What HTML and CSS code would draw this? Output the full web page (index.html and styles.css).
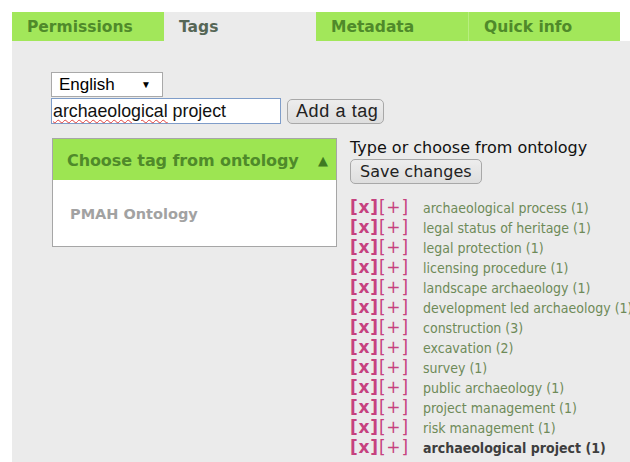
FILE: index.html
```html
<!DOCTYPE html>
<html lang="en">
<head>
<meta charset="utf-8">
<title>Tags</title>
<link rel="stylesheet" href="styles.css">
</head>
<body>
<div class="page">
  <nav class="tabs">
    <a class="tab">Permissions</a>
    <a class="tab active">Tags</a>
    <a class="tab">Metadata</a>
    <a class="tab">Quick info</a>
  </nav>
  <section class="panel">
    <div class="select"><span>English</span><span class="caret">&#9660;</span></div>
    <div class="add-row">
      <div class="input"><span class="misspelt">archaeological</span> project</div>
      <button class="btn">Add a tag</button>
    </div>
    <div class="columns">
      <div class="ontology">
        <div class="ontology-head"><span>Choose tag from ontology</span><span class="up">&#9650;</span></div>
        <div class="ontology-body">PMAH Ontology</div>
      </div>
      <div class="taglist">
        <p class="hint">Type or choose from ontology</p>
        <button class="btn save">Save changes</button>
        <ul class="tags">
          <li><span class="ops"><b>[x]</b>[+]</span><span class="name">archaeological process (1)</span></li>
          <li><span class="ops"><b>[x]</b>[+]</span><span class="name">legal status of heritage (1)</span></li>
          <li><span class="ops"><b>[x]</b>[+]</span><span class="name">legal protection (1)</span></li>
          <li><span class="ops"><b>[x]</b>[+]</span><span class="name">licensing procedure (1)</span></li>
          <li><span class="ops"><b>[x]</b>[+]</span><span class="name">landscape archaeology (1)</span></li>
          <li><span class="ops"><b>[x]</b>[+]</span><span class="name">development led archaeology (1)</span></li>
          <li><span class="ops"><b>[x]</b>[+]</span><span class="name">construction (3)</span></li>
          <li><span class="ops"><b>[x]</b>[+]</span><span class="name">excavation (2)</span></li>
          <li><span class="ops"><b>[x]</b>[+]</span><span class="name">survey (1)</span></li>
          <li><span class="ops"><b>[x]</b>[+]</span><span class="name">public archaeology (1)</span></li>
          <li><span class="ops"><b>[x]</b>[+]</span><span class="name">project management (1)</span></li>
          <li><span class="ops"><b>[x]</b>[+]</span><span class="name">risk management (1)</span></li>
          <li class="current"><span class="ops"><b>[x]</b>[+]</span><span class="name">archaeological project (1)</span></li>
        </ul>
      </div>
    </div>
  </section>
</div>
</body>
</html>
```
FILE: styles.css
```css
html, body {
  margin: 0;
  padding: 0;
  background: #ffffff;
  overflow: hidden;
}

.page {
  padding: 12px 0 0 12px;
  width: 618px;
  height: 450px;
}

/* tab strip */
.tabs {
  display: flex;
  height: 29px;
}

.tab {
  width: 152px;
  box-sizing: border-box;
  padding: 2px 0 0 15px;
  background: #a2e75a;
  color: #4f8a2a;
  font: bold 15.5px/27px "DejaVu Sans", sans-serif;
}

.tab + .tab {
  border-left: 1px solid #b8ee80;
}

.tab.active {
  width: 152px;
  background: #ebebeb;
  color: #566656;
  border-left: none;
}

.tab.active + .tab {
  border-left: none;
}

/* content panel */
.panel {
  background: #ebebeb;
  height: 421px;
  box-sizing: border-box;
  padding: 31px 0 0 39px;
  font-family: "Liberation Sans", Arial, sans-serif;
  color: #000;
}

.select {
  width: 112px;
  height: 25px;
  box-sizing: border-box;
  border: 1px solid #a9a9a9;
  background: #fff;
  display: flex;
  justify-content: space-between;
  align-items: center;
  padding: 0 11px 0 7px;
  font-size: 17px;
}

.caret {
  font-size: 10px;
}

.add-row {
  display: flex;
  align-items: center;
  margin-top: 1px;
}

.input {
  width: 230px;
  height: 26px;
  box-sizing: border-box;
  border: 1px solid #7f9dc9;
  background: #fff;
  padding: 0 0 0 1px;
  font-size: 17.8px;
  line-height: 24px;
  color: #111;
}

.misspelt {
  text-decoration: underline wavy #e0403c;
  text-decoration-thickness: 1px;
  text-underline-offset: 2px;
}

.btn {
  font-family: "Liberation Sans", Arial, sans-serif;
  font-size: 18px;
  letter-spacing: 0.6px;
  height: 25px;
  padding: 0 5px 0 8px;
  margin-left: 6px;
  border: 1px solid #a8a8a8;
  border-radius: 5px;
  background: linear-gradient(#ededed, #dedede);
  color: #222;
}

.columns {
  display: flex;
  align-items: flex-start;
  margin-top: 14px;
}

/* ontology picker */
.ontology {
  flex: none;
  width: 285px;
  box-sizing: border-box;
  border: 1px solid #a6a6a6;
  background: #fff;
  margin-left: 1px;
}

.ontology-head {
  height: 41px;
  background: #9de552;
  display: flex;
  justify-content: space-between;
  align-items: center;
  padding: 1px 8px 0 14px;
  box-sizing: border-box;
  color: #4f8a2a;
  font: bold 16px "DejaVu Sans", sans-serif;
  letter-spacing: -0.1px;
}

.up {
  font-size: 13px;
  color: #3f7a22;
}

.ontology-body {
  height: 66px;
  box-sizing: border-box;
  padding: 26px 0 0 17px;
  color: #a2a2a2;
  font: bold 14.5px "DejaVu Sans", sans-serif;
}

/* tag list */
.taglist {
  flex: none;
  margin-left: 13px;
}

.hint {
  margin: 0;
  font: 16px/20px "DejaVu Sans", sans-serif;
  color: #111;
}

.save {
  font-family: "DejaVu Sans", sans-serif;
  font-size: 16px;
  letter-spacing: 0;
  margin: 1px 0 0 0;
  padding: 0 9px;
}

.tags {
  list-style: none;
  margin: 13px 0 0 0;
  padding: 0;
}

.tags li {
  display: flex;
  align-items: baseline;
  height: 20px;
  white-space: nowrap;
}

.ops {
  width: 73px;
  flex: none;
  color: #c6427f;
  font: 17px/20px "DejaVu Sans", sans-serif;
  letter-spacing: 0.8px;
}

.ops b {
  font-weight: bold;
}

.name {
  color: #6e8a58;
  font: 14px/20px "DejaVu Sans Condensed", "DejaVu Sans", sans-serif;
}

.current .name {
  font-weight: bold;
  color: #3e3e3e;
}
```
